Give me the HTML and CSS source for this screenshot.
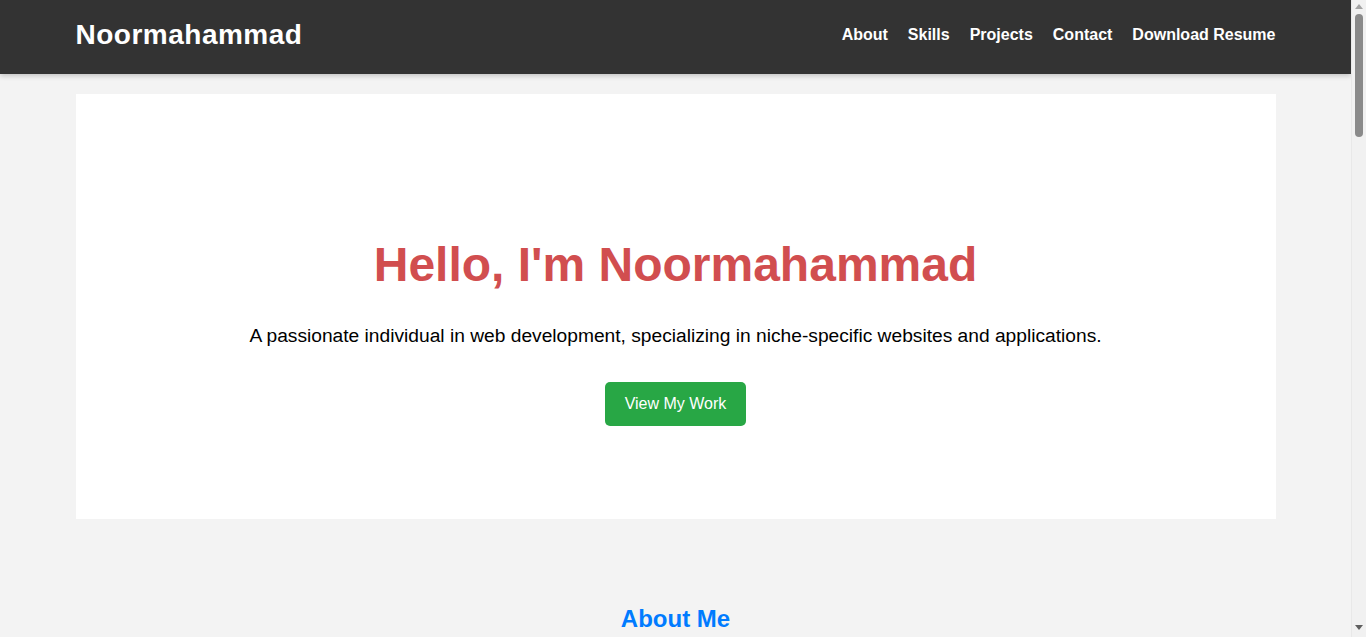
FILE: index.html
```html
<!DOCTYPE html>
<html lang="en">
<head>
<meta charset="utf-8">
<title>Noormahammad - Portfolio</title>
<link rel="stylesheet" href="styles.css">
</head>
<body>
<header class="site-header">
  <div class="container header-inner">
    <h1 class="logo">Noormahammad</h1>
    <nav class="nav">
      <a href="#about">About</a>
      <a href="#skills">Skills</a>
      <a href="#projects">Projects</a>
      <a href="#contact">Contact</a>
      <a href="#resume">Download Resume</a>
    </nav>
  </div>
</header>

<main class="container page">
  <section class="hero">
    <h2 class="hero-title">Hello, I'm Noormahammad</h2>
    <p class="hero-text">A passionate individual in web development, specializing in niche-specific websites and applications.</p>
    <a class="btn" href="#projects">View My Work</a>
  </section>

  <section class="section" id="about">
    <h2 class="section-title">About Me</h2>
    <p class="section-text">I build clean, responsive and fast websites tailored to the needs of specific niches. I enjoy turning ideas into working products and learning new tools along the way.</p>
  </section>

  <section class="section" id="skills">
    <h2 class="section-title">Skills</h2>
    <ul class="skill-list">
      <li>HTML5</li>
      <li>CSS3</li>
      <li>JavaScript</li>
      <li>React</li>
      <li>Node.js</li>
      <li>WordPress</li>
    </ul>
  </section>

  <section class="section" id="projects">
    <h2 class="section-title">Projects</h2>
    <div class="project-grid">
      <div class="project">Project One</div>
      <div class="project">Project Two</div>
      <div class="project">Project Three</div>
    </div>
  </section>

  <section class="section" id="contact">
    <h2 class="section-title">Contact</h2>
    <p class="section-text">Feel free to reach out for collaborations or just a friendly hello.</p>
  </section>
</main>

<div class="scrollbar" aria-hidden="true">
  <span class="sb-arrow sb-up"></span>
  <div class="sb-track">
    <span class="sb-thumb"></span>
  </div>
  <span class="sb-arrow sb-down"></span>
</div>
</body>
</html>
```

FILE: styles.css
```css
* {
  box-sizing: border-box;
}

html {
  scrollbar-width: none;
}

html::-webkit-scrollbar {
  display: none;
}

body {
  margin: 0 15px 0 0;
  font-family: "Liberation Sans", Arial, sans-serif;
  background: #f3f3f3;
  color: #000;
  line-height: normal;
}

.container {
  max-width: 1200px;
  margin: 0 auto;
}

.site-header {
  background: #333;
  color: #fff;
  box-shadow: 0 2px 5px rgba(0, 0, 0, 0.2);
}

.header-inner {
  display: flex;
  align-items: center;
  justify-content: space-between;
  height: 74px;
  padding-bottom: 4px;
}

.logo {
  margin: 0;
  font-size: 28px;
  font-weight: bold;
  letter-spacing: 0.5px;
}

.nav {
  display: flex;
  gap: 20px;
}

.nav a {
  color: #fff;
  text-decoration: none;
  font-weight: bold;
  font-size: 16px;
}

.page {
  padding-top: 20px;
  min-height: 2866px;
}

.hero {
  background: #fff;
  height: 425px;
  display: flex;
  flex-direction: column;
  align-items: center;
  justify-content: center;
  text-align: center;
  padding-top: 49px;
}

.hero-title {
  margin: 0;
  font-size: 48px;
  font-weight: bold;
  color: #d14e4f;
}

.hero-text {
  margin: 33px 0 0;
  font-size: 19.2px;
}

.btn {
  display: inline-block;
  margin-top: 35px;
  padding: 13px 20px;
  line-height: 18px;
  background: #28a745;
  color: #fff;
  text-decoration: none;
  font-size: 16px;
  border-radius: 5px;
}

.section {
  padding: 86px 20px 200px;
  text-align: center;
}

.section-title {
  margin: 0 0 20px;
  font-size: 24px;
  color: #007bff;
}

.section-text {
  font-size: 16px;
  margin: 0;
}

.skill-list {
  list-style: none;
  padding: 0;
  margin: 0;
  display: flex;
  justify-content: center;
  gap: 20px;
}

.project-grid {
  display: grid;
  grid-template-columns: repeat(3, 1fr);
  gap: 20px;
}

.project {
  background: #fff;
  padding: 40px 20px;
}

/* decorative replica of the classic browser scrollbar */
.scrollbar {
  position: fixed;
  top: 0;
  right: 0;
  width: 15px;
  height: 100vh;
  background: #f1f1f1;
  border-left: 1px solid #e8e8e8;
  display: flex;
  flex-direction: column;
  align-items: center;
  padding: 4px 0 7px;
}

.sb-arrow {
  width: 0;
  height: 0;
  border-left: 4.5px solid transparent;
  border-right: 4.5px solid transparent;
}

.sb-up {
  border-bottom: 5px solid #a3a3a3;
}

.sb-down {
  border-top: 5px solid #5f5f5f;
}

.sb-track {
  flex: 1;
  width: 100%;
  display: flex;
  justify-content: center;
  padding-top: 5px;
}

.sb-thumb {
  width: 8px;
  height: 123px;
  border-radius: 4px;
  background: #8a8a8a;
}
```
